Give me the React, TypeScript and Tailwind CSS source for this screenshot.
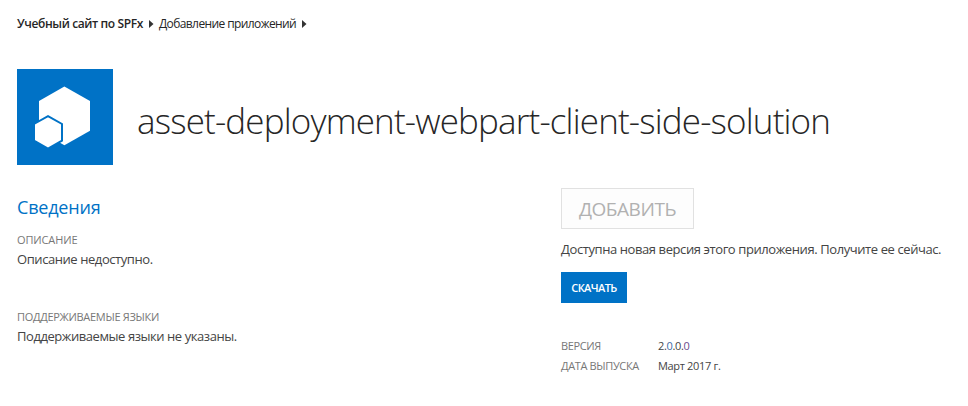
function Arrow() {
  return (
    <svg width="5" height="8" viewBox="0 0 5 8" className="shrink-0" aria-hidden="true">
      <path d="M0 0L4.5 4L0 8Z" fill="#333333" />
    </svg>
  );
}

function AppIcon() {
  return (
    <svg width="96" height="96" viewBox="0 0 96 96" className="shrink-0" aria-hidden="true">
      <rect width="96" height="96" fill="#0072c6" />
      <path d="M47.4 17.5L73 32V61.7L47.4 76.3L22 61.7V32Z" fill="#fff" />
      <path
        d="M31 47.2L45 55V71.6L31 79.6L17 71.6V55Z"
        fill="#fff"
        stroke="#0072c6"
        strokeWidth="2"
      />
    </svg>
  );
}

export default function App() {
  return (
    <div className="h-[406px] w-[968px] overflow-hidden bg-white pl-[17px] font-['Open_Sans','Noto_Sans',sans-serif] text-[13px] leading-5 text-[#444444]">
      <nav className="flex items-center pt-[14px] text-[12px] whitespace-nowrap text-[#262626]">
        <span className="w-[132px] font-semibold tracking-[-0.38px]">Учебный сайт по SPFx</span>
        <Arrow />
        <span className="ml-[5px] w-[143px] tracking-[-0.6px]">Добавление приложений</span>
        <Arrow />
      </nav>

      <header className="mt-[35px] flex items-center">
        <AppIcon />
        <h1 className="ml-6 pt-[8px] text-[35px] leading-[48px] font-light tracking-[-0.84px] whitespace-nowrap text-[#262626]">
          asset-deployment-webpart-client-side-solution
        </h1>
      </header>

      <main className="flex">
        <section className="w-[544px] pt-[30px]">
          <h2 className="text-[18px] leading-6 tracking-[-0.2px] text-[#0072c6]">Сведения</h2>
          <h3 className="mt-[13px] text-[11px] leading-4 tracking-[-0.12px] text-[#777777]">ОПИСАНИЕ</h3>
          <p className="mt-px tracking-[-0.43px]">Описание недоступно.</p>
          <h3 className="mt-10 text-[11px] leading-4 tracking-[-0.3px] text-[#777777]">ПОДДЕРЖИВАЕМЫЕ ЯЗЫКИ</h3>
          <p className="mt-px tracking-[-0.44px]">Поддерживаемые языки не указаны.</p>
        </section>

        <aside className="flex flex-col items-start pt-[23px] whitespace-nowrap">
          <button
            disabled
            className="h-[41px] w-[133px] border border-[#e1e1e1] bg-[#fdfdfd] pt-px text-[19px] tracking-[-0.45px] text-[#b1b1b1]"
          >
            ДОБАВИТЬ
          </button>
          <p className="mt-[10px] tracking-[-0.41px]">
            Доступна новая версия этого приложения. Получите ее сейчас.
          </p>
          <button className="mt-[13px] h-[31px] w-[66px] bg-[#0072c6] text-[11px] font-semibold tracking-[-0.6px] text-white">
            СКАЧАТЬ
          </button>
          <dl className="mt-[33px] grid grid-cols-[97px_auto] text-[11px]">
            <dt className="tracking-[-0.35px] text-[#777777]">ВЕРСИЯ</dt>
            <dd className="tracking-[-0.35px]">
              2.<span className="text-[#3c6da6]">0</span>.0.<span className="text-[#6b4a8c]">0</span>
            </dd>
            <dt className="tracking-[-0.36px] text-[#777777]">ДАТА ВЫПУСКА</dt>
            <dd className="tracking-[-0.33px]">Март 2017 г.</dd>
          </dl>
        </aside>
      </main>
    </div>
  );
}
